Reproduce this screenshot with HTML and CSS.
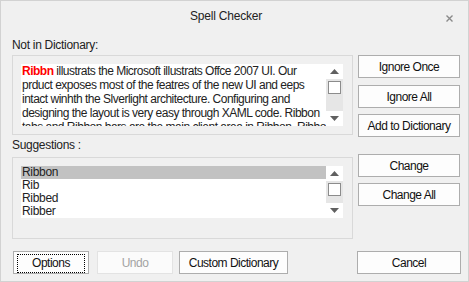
FILE: index.html
```html
<!DOCTYPE html>
<html>
<head>
<meta name="viewport" content="width=device-width, initial-scale=1">
<link rel="stylesheet" href="styles.css">
</head>
<body>

<div class="window">
  <div class="titlebar">
    <div class="title">Spell Checker</div>
    <div class="close">
      <svg width="7" height="7" viewBox="0 0 7 7"><path d="M0.5 0.5 L6.5 6.5 M6.5 0.5 L0.5 6.5" stroke="#8a8a8a" stroke-width="1.4"/></svg>
    </div>
  </div>

  <div class="main">
    <div class="left">
      <div class="label">Not in Dictionary:</div>
      <div class="group group-text">
        <div class="textbox">
          <div class="text">
            <span class="miss">Ribbn</span> illustrats the Microsoft illustrats Offce 2007 UI. Our<br>
            prduct exposes most of the featres of the new UI and eeps<br>
            intact winhth the Slverlight architecture. Configuring and<br>
            designing the layout is very easy through XAML code. Ribbon<br>
            tabs and Ribbon bars are the main client area in Ribbon. Ribbon
          </div>
          <div class="vscroll">
            <div class="sb-btn"><svg width="9" height="5" viewBox="0 0 9 5"><path d="M0 5 L4.5 0 L9 5 Z" fill="#606060"/></svg></div>
            <div class="sb-track"><div class="sb-thumb"></div></div>
            <div class="sb-btn"><svg width="9" height="5" viewBox="0 0 9 5"><path d="M0 0 L4.5 5 L9 0 Z" fill="#606060"/></svg></div>
          </div>
        </div>
      </div>

      <div class="label label-sugg">Suggestions :</div>
      <div class="group group-list">
        <div class="listbox">
          <div class="list">
            <div class="item selected">Ribbon</div>
            <div class="item">Rib</div>
            <div class="item">Ribbed</div>
            <div class="item">Ribber</div>
          </div>
          <div class="vscroll">
            <div class="sb-btn"><svg width="9" height="5" viewBox="0 0 9 5"><path d="M0 5 L4.5 0 L9 5 Z" fill="#606060"/></svg></div>
            <div class="sb-track"><div class="sb-thumb"></div></div>
            <div class="sb-btn"><svg width="9" height="5" viewBox="0 0 9 5"><path d="M0 0 L4.5 5 L9 0 Z" fill="#606060"/></svg></div>
          </div>
        </div>
      </div>
    </div>

    <div class="right">
      <button class="btn">Ignore Once</button>
      <button class="btn gap7">Ignore All</button>
      <button class="btn gap6">Add to Dictionary</button>
      <button class="btn gap17">Change</button>
      <button class="btn gap6">Change All</button>
    </div>
  </div>

  <div class="footer">
    <button class="btn btn-options"><span class="focus">Options</span></button>
    <button class="btn btn-undo" disabled>Undo</button>
    <button class="btn btn-custom">Custom Dictionary</button>
    <button class="btn btn-cancel">Cancel</button>
  </div>
</div>

</body>
</html>
```

FILE: styles.css
```css
body {
  margin: 0;
}

.window {
  width: 469px;
  height: 282px;
  box-sizing: border-box;
  border: 1px solid #d2d2d2;
  background: #f0f0f0;
  font-family: "Liberation Sans", Arial, sans-serif;
  font-size: 12px;
  color: #000;
  display: flex;
  flex-direction: column;
}

.titlebar {
  height: 37px;
  display: flex;
  align-items: flex-start;
}

.title {
  flex: 1;
  text-align: center;
  line-height: 15px;
  padding-top: 8px;
  padding-left: 5px;
  letter-spacing: -0.2px;
  color: #222;
}

.close {
  width: 7px;
  height: 7px;
  margin-top: 14px;
  margin-right: 15px;
}

.close svg {
  display: block;
}

.main {
  display: flex;
  padding-left: 11px;
}

.left {
  width: 341px;
}

.label {
  height: 15px;
  line-height: 15px;
  margin-bottom: 2px;
  letter-spacing: -0.3px;
  color: #222;
}

.label-sugg {
  margin-top: 3px;
  margin-bottom: 4px;
}

.group {
  box-sizing: border-box;
  border: 1px solid #d9d9d9;
  padding: 8px 9px 0 8px;
}

.group-text {
  height: 80px;
}

.group-list {
  height: 82px;
}

.textbox, .listbox {
  display: flex;
  background: #fff;
}

.textbox {
  height: 62px;
}

.listbox {
  height: 52px;
}

.text {
  flex: 1;
  overflow: hidden;
  white-space: nowrap;
  line-height: 14px;
  padding-left: 1px;
  color: #222;
  letter-spacing: -0.5px;
}

.miss {
  color: #ff0000;
  font-weight: bold;
}

.list {
  flex: 1;
  overflow: hidden;
}

.item {
  line-height: 13px;
  padding-left: 1px;
  letter-spacing: -0.3px;
  color: #222;
}

.item.selected {
  background: #c2c2c2;
}

.vscroll {
  width: 17px;
  display: flex;
  flex-direction: column;
}

.sb-btn {
  height: 15px;
  display: flex;
  align-items: center;
  justify-content: center;
  background: #fff;
}

.sb-btn svg {
  display: block;
}

.sb-track {
  flex: 1;
  background: #e6e6e6;
}

.sb-thumb {
  box-sizing: border-box;
  width: 13px;
  height: 13px;
  margin: 2px 0 0 2px;
  border: 1px solid #8c8c8c;
  background: #fff;
}

.right {
  margin-left: 5px;
  margin-top: 17px;
  display: flex;
  flex-direction: column;
}

.btn {
  box-sizing: border-box;
  height: 23px;
  width: 102px;
  padding: 0;
  border: 1px solid #adadad;
  background: #fdfdfd;
  font-family: "Liberation Sans", Arial, sans-serif;
  font-size: 12px;
  letter-spacing: -0.5px;
  color: #111;
}

.gap6 { margin-top: 6px; }
.gap7 { margin-top: 7px; }
.gap17 { margin-top: 17px; }

.footer {
  display: flex;
  padding-left: 12px;
  margin-top: 12px;
}

.btn-options {
  width: 76px;
  padding: 2px 3px;
}

.focus {
  display: block;
  height: 17px;
  line-height: 17px;
  border: 1px dotted #000;
}

.btn-undo {
  width: 76px;
  margin-left: 8px;
  border-color: #e3e3e3;
  background: #fbfbfb;
  color: #a3a3a3;
}

.btn-custom {
  width: 109px;
  margin-left: 6px;
}

.btn-cancel {
  width: 104px;
  margin-left: auto;
  margin-right: 7px;
}
```
